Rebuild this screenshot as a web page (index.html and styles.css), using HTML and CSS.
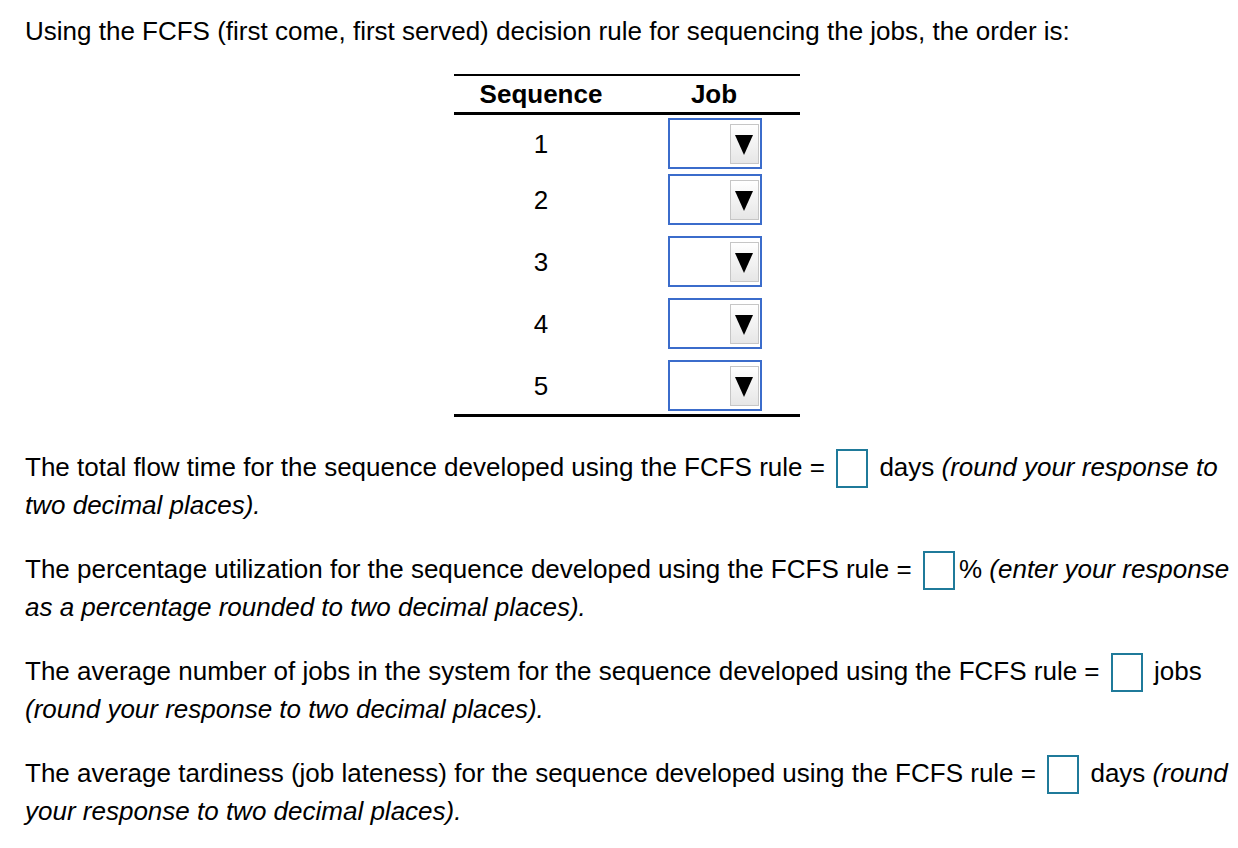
FILE: index.html
```html
<!DOCTYPE html>
<html>
  <head>
    <title>FCFS Sequencing</title>
    <link rel="stylesheet" href="styles.css">
  </head>
  <body>
    <div class="question">
      <p class="intro">Using the FCFS (first come, first served) decision rule for sequencing the jobs, the order is:</p>

      <table class="seq-table">
        <thead>
          <tr>
            <th>Sequence</th>
            <th>Job</th>
          </tr>
        </thead>
        <tbody>
          <tr>
            <td>1</td>
            <td><span class="select"><span class="arrow"></span></span></td>
          </tr>
          <tr>
            <td>2</td>
            <td><span class="select"><span class="arrow"></span></span></td>
          </tr>
          <tr>
            <td>3</td>
            <td><span class="select"><span class="arrow"></span></span></td>
          </tr>
          <tr>
            <td>4</td>
            <td><span class="select"><span class="arrow"></span></span></td>
          </tr>
          <tr>
            <td>5</td>
            <td><span class="select"><span class="arrow"></span></span></td>
          </tr>
        </tbody>
      </table>

      <p class="answer">The total flow time for the sequence developed using the FCFS rule = <span class="box"></span> days <em>(round your response to two decimal places).</em></p>

      <p class="answer">The percentage utilization for the sequence developed using the FCFS rule = <span class="box"></span>% <em>(enter your response as a percentage rounded to two decimal places).</em></p>

      <p class="answer">The average number of jobs in the system for the sequence developed using the FCFS rule = <span class="box"></span> jobs <em>(round your response to two decimal places).</em></p>

      <p class="answer">The average tardiness (job lateness) for the sequence developed using the FCFS rule = <span class="box"></span> days <em>(round your response to two decimal places).</em></p>
    </div>
  </body>
</html>
```

FILE: styles.css
```css
/* Styles for the question */
body {
  font-family: "Liberation Sans", Arial, sans-serif;
  font-size: 26px;
  line-height: 38px;
  color: #000;
  background-color: #fff;
  margin: 0;
  padding: 0;
}

.question {
  padding: 12px 0 0 25px;
}

p {
  margin: 0 0 26px 0;
}

.intro {
  margin-bottom: 24px;
}

.seq-table {
  border-collapse: collapse;
  margin-left: 429px;
  margin-bottom: 31px;
  border-top: 2px solid #000;
  border-bottom: 3px solid #000;
}

.seq-table th {
  font-weight: bold;
  height: 36px;
  line-height: 26px;
  padding: 0;
  text-align: center;
  vertical-align: middle;
  border-bottom: 3px solid #000;
}

.seq-table th:first-child,
.seq-table td:first-child {
  width: 174px;
}

.seq-table th:last-child,
.seq-table td:last-child {
  width: 172px;
}

.seq-table td {
  text-align: center;
  vertical-align: middle;
  padding: 11px 0 0 0;
  line-height: 1;
}

.seq-table tbody tr:first-child td {
  padding-top: 3px;
}

.seq-table tbody tr:nth-child(2) td {
  padding-top: 5px;
}

.seq-table tbody tr:last-child td {
  padding-bottom: 3px;
}

.select {
  display: inline-block;
  box-sizing: border-box;
  width: 94px;
  height: 51px;
  border: 2px solid #3b6ccb;
  background-color: #fff;
  position: relative;
  vertical-align: middle;
  margin-left: 2px;
}

.arrow {
  position: absolute;
  right: 1px;
  top: 4px;
  width: 29px;
  height: 40px;
  box-sizing: border-box;
  border: 1px solid #c6c6c6;
  background: linear-gradient(#ffffff, #e6e6e6);
}

.arrow::after {
  content: "";
  position: absolute;
  left: 4px;
  top: 10px;
  border-left: 9.5px solid transparent;
  border-right: 9.5px solid transparent;
  border-top: 20px solid #000;
}

.box {
  display: inline-block;
  box-sizing: border-box;
  width: 32px;
  height: 39px;
  border: 2px solid #1f7a9a;
  vertical-align: middle;
  margin: -5px 4px -3px 4px;
}

em {
  font-style: italic;
}
```
